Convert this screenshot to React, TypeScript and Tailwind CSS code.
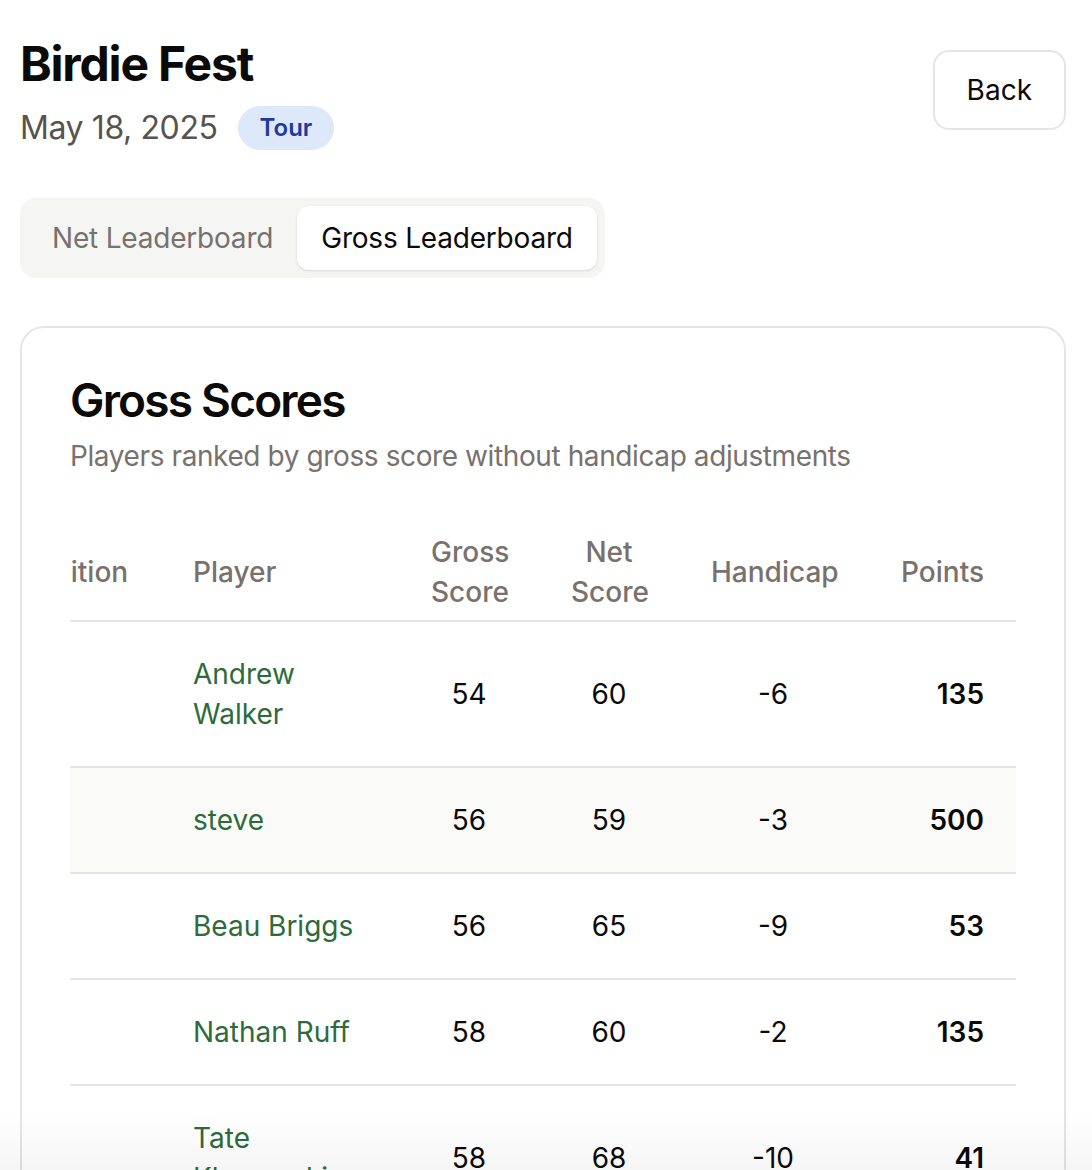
import { useState } from "react";

type Row = { pos: number; name: string; gross: number; net: number; hcp: number; points: number };

const rows: Row[] = [
  { pos: 1, name: "Andrew Walker", gross: 54, net: 60, hcp: -6, points: 135 },
  { pos: 2, name: "steve", gross: 56, net: 59, hcp: -3, points: 500 },
  { pos: 3, name: "Beau Briggs", gross: 56, net: 65, hcp: -9, points: 53 },
  { pos: 4, name: "Nathan Ruff", gross: 58, net: 60, hcp: -2, points: 135 },
  { pos: 5, name: "Tate Klonowski", gross: 58, net: 68, hcp: -10, points: 41 },
];

const highlighted = "steve";

const App = () => {
  const [tab, setTab] = useState<"net" | "gross">("gross");

  return (
    <div className="relative min-h-screen bg-white px-[20px] pt-[32px] pb-[48px] font-['Inter',sans-serif] text-[#0c0a09]">
      <div className="flex flex-row justify-between items-center">
        <div className="flex flex-col">
          <h1 className="text-[48px] leading-[64px] font-bold tracking-tight">Birdie Fest</h1>
          <div className="flex flex-row items-center gap-[20px] mt-[8px]">
            <span className="text-[32px] leading-[48px] text-[#57534e] tracking-[-0.4px]">May 18, 2025</span>
            <span className="h-[44px] px-[22px] flex items-center rounded-full bg-[#dde8fb] text-[#1e3a9f] text-[24px] font-semibold">Tour</span>
          </div>
        </div>
        <button type="button" className="h-[80px] px-[32px] rounded-[16px] border-2 border-[#e7e5e4] bg-white text-[28px] mr-[6px] -mt-[4px]">
          Back
        </button>
      </div>

      <div className="inline-flex mt-[46px] p-[8px] rounded-[16px] bg-[#f5f5f4]">
        <button
          type="button"
          onClick={() => setTab("net")}
          className={`h-[64px] px-[24px] rounded-[12px] text-[28px] tracking-[-0.2px] ${tab === "net" ? "bg-white text-[#0c0a09] shadow-sm" : "text-[#78716c]"}`}
        >
          Net Leaderboard
        </button>
        <button
          type="button"
          onClick={() => setTab("gross")}
          className={`h-[64px] px-[24px] rounded-[12px] text-[28px] tracking-[-0.2px] ${tab === "gross" ? "bg-white text-[#0c0a09] shadow-sm" : "text-[#78716c]"}`}
        >
          Gross Leaderboard
        </button>
      </div>

      <div className="mt-[48px] mr-[6px] rounded-[24px] border-2 border-[#e7e5e4] bg-white">
        <div className="flex flex-col gap-[12px] p-[48px]">
          <h2 className="text-[46px] leading-[48px] font-semibold tracking-[-1.8px]">Gross Scores</h2>
          <p className="text-[28px] leading-[40px] text-[#78716c] tracking-[-0.4px]">Players ranked by gross score without handicap adjustments</p>
        </div>

        <div className="px-[48px] pb-[48px]">
          <div className="overflow-hidden">
            <table className="table-fixed w-[1027px] -ml-[81px] border-collapse text-[28px] leading-[40px]">
              <thead>
                <tr className="border-b-2 border-[#e7e5e4] text-[#78716c]">
                  <th className="w-[172px] px-[32px] py-[8px] text-left font-medium">Position</th>
                  <th className="w-[238px] px-[32px] py-[8px] text-left font-medium">Player</th>
                  <th className="w-[140px] px-[32px] py-[8px] text-center font-medium">Gross Score</th>
                  <th className="w-[140px] px-[32px] py-[8px] text-center font-medium">Net Score</th>
                  <th className="w-[188px] px-[32px] py-[8px] text-center font-medium">Handicap</th>
                  <th className="w-[149px] px-[32px] py-[8px] text-right font-medium">Points</th>
                </tr>
              </thead>
              <tbody>
                {rows.map((r) => (
                  <tr key={r.pos} className={`border-b-2 border-[#e7e5e4] ${r.name === highlighted ? "bg-[#fafaf9]" : ""}`}>
                    <td className="px-[32px] py-[32px] font-medium">{r.pos}</td>
                    <td className="px-[32px] py-[32px] text-[#2e6b3a]">{r.name}</td>
                    <td className="px-[32px] py-[32px] text-center">{r.gross}</td>
                    <td className="px-[32px] py-[32px] text-center">{r.net}</td>
                    <td className="px-[32px] py-[32px] text-center">{r.hcp}</td>
                    <td className="px-[32px] py-[32px] text-right font-semibold">{r.points}</td>
                  </tr>
                ))}
              </tbody>
            </table>
          </div>
        </div>
      </div>

      <div className="pointer-events-none fixed left-0 right-0 bottom-0 h-[56px] bg-gradient-to-b from-transparent to-black/[0.04]" />
    </div>
  );
};

export default App;
